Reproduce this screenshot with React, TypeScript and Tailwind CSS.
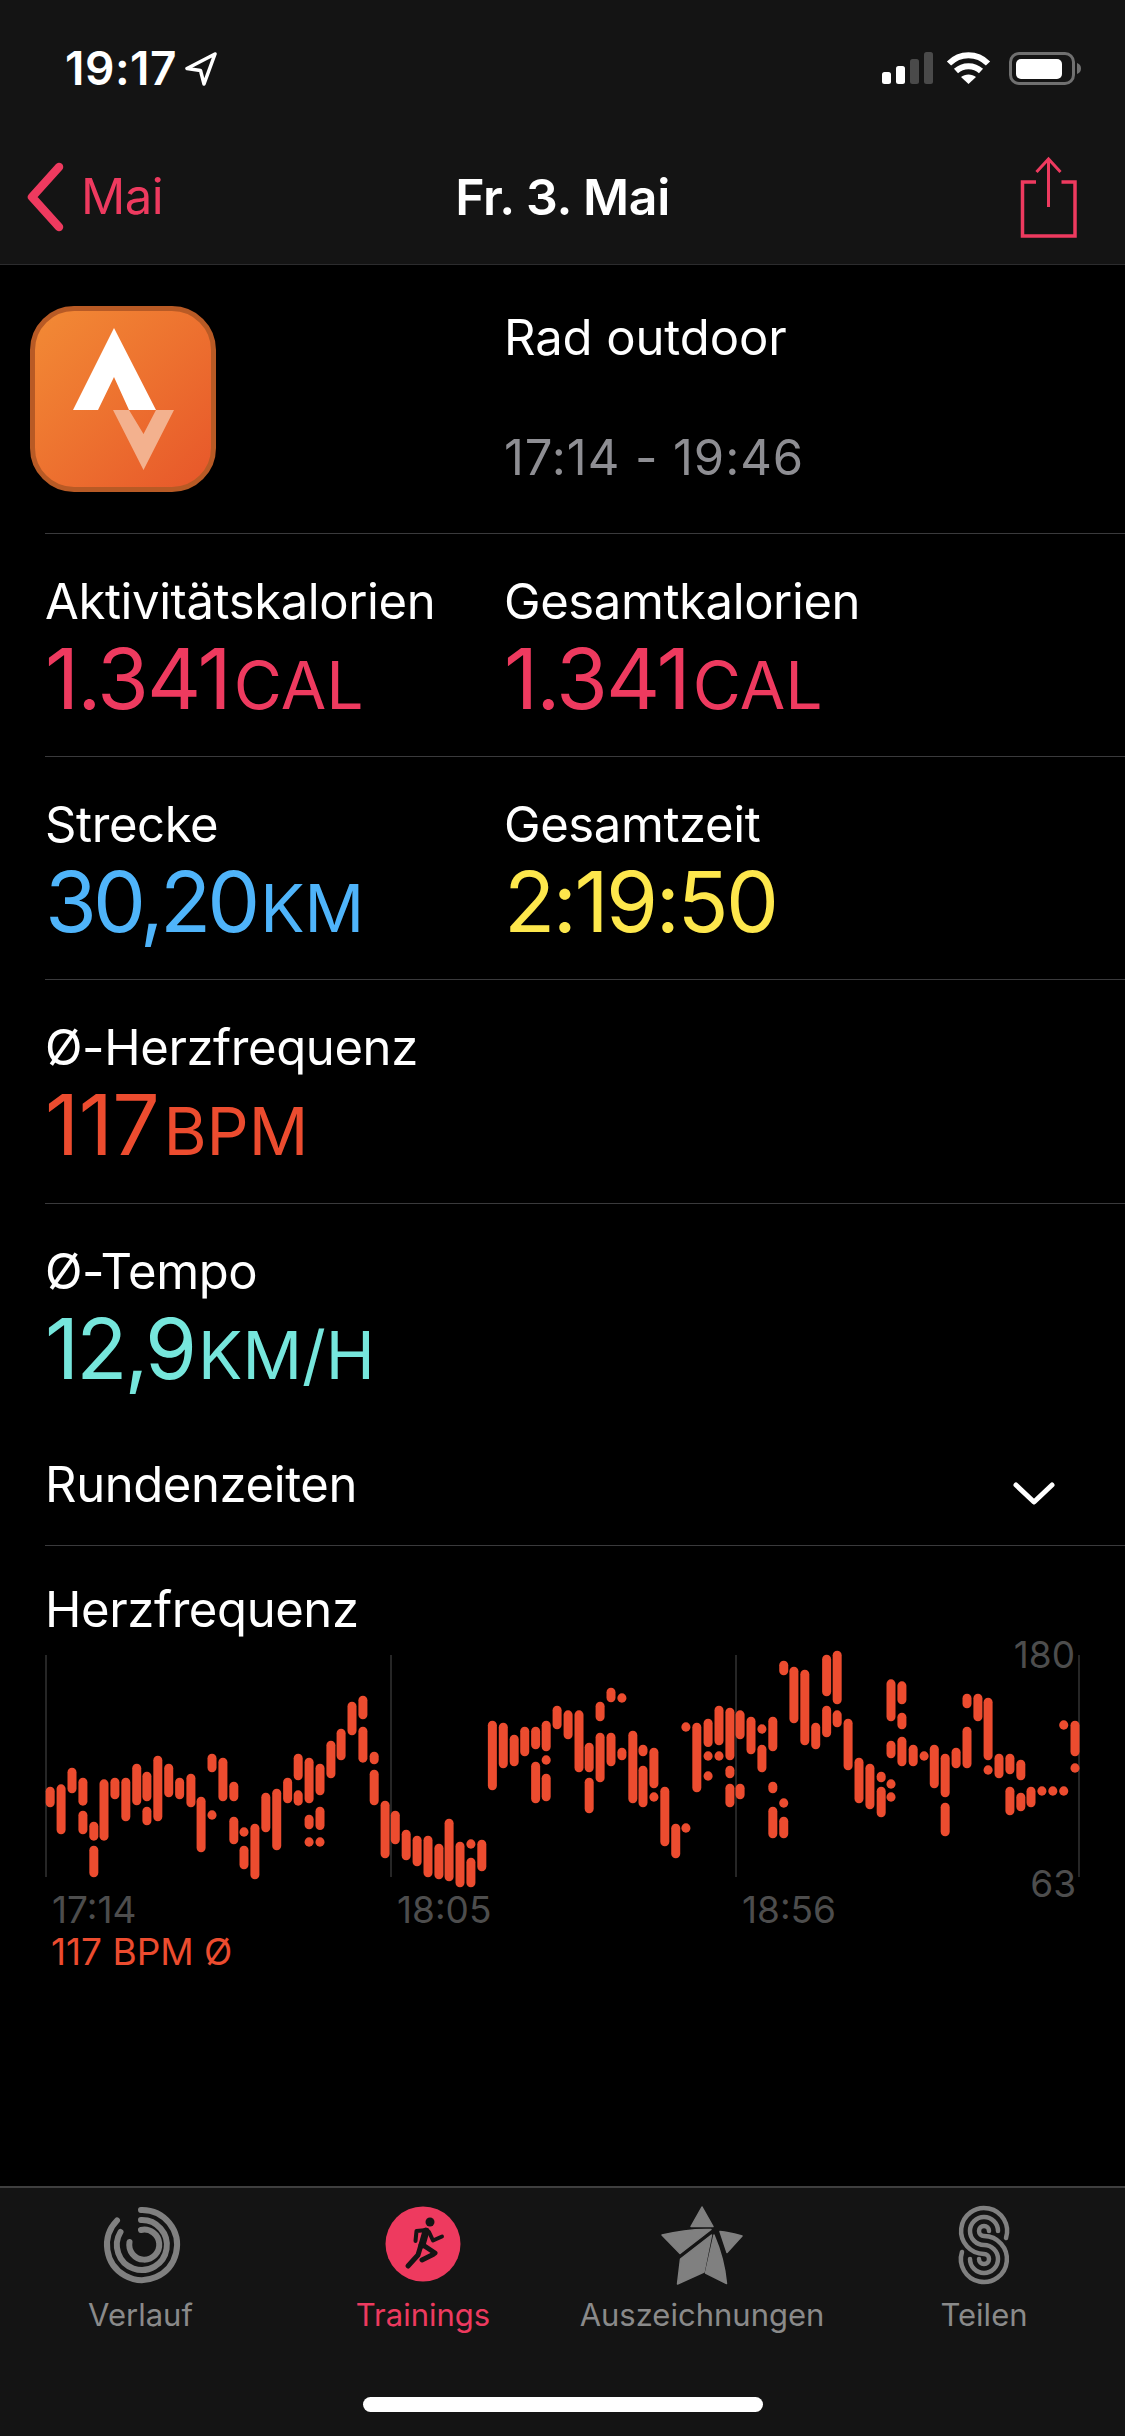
import type { ReactNode } from 'react';

// chart bars as [x, top, bottom], measured in the two zoomed crops
const BARS_LEFT: number[][] = [
  [138, 560, 622], [168, 553, 703], [198, 503, 580], [228, 533, 617], [228, 632, 703],
  [258, 665, 722], [258, 737, 832], [286, 538, 722], [316, 533, 598], [346, 533, 664],
  [376, 491, 616], [404, 515, 604], [404, 620, 676], [434, 467, 664], [464, 491, 592],
  [494, 533, 598], [525, 521, 622], [553, 590, 757], [583, 461, 517], [583, 632, 658],
  [613, 473, 604], [643, 545, 604], [643, 650, 733], [671, 683, 709], [671, 737, 808],
  [701, 671, 838], [731, 578, 697], [761, 566, 751], [791, 533, 610], [820, 461, 541],
  [820, 571, 617], [850, 473, 610], [850, 644, 688], [850, 713, 739], [880, 491, 586],
  [880, 620, 690], [880, 713, 739], [910, 422, 535], [938, 386, 481], [968, 305, 406],
  [998, 287, 358], [998, 380, 488], [1029, 455, 493], [1029, 509, 616], [1059, 602, 775],
  [1087, 632, 733], [1117, 689, 781], [1147, 707, 799], [1177, 707, 832], [1207, 731, 838],
  [1235, 656, 844], [1265, 725, 862], [1295, 719, 745], [1295, 773, 862], [1325, 719, 814],
  [1354, 362, 571], [1384, 368, 505], [1414, 404, 499], [1443, 380, 469], [1473, 380, 448],
  [1473, 485, 610], [1502, 362, 454], [1502, 467, 493], [1502, 521, 604], [1532, 317, 388],
];

const BARS_RIGHT: number[][] = [
  [36, 331, 418], [66, 331, 517], [94, 428, 517], [94, 533, 640], [124, 305, 364],
  [124, 398, 547], [154, 263, 307], [154, 398, 499], [184, 281, 307], [184, 443, 481],
  [214, 392, 610], [242, 434, 469], [242, 497, 622], [272, 443, 565], [272, 578, 604],
  [302, 560, 739], [332, 671, 775], [360, 368, 394], [360, 671, 697], [390, 368, 577],
  [421, 356, 441], [421, 455, 481], [421, 515, 541], [451, 317, 436], [451, 455, 481],
  [481, 323, 481], [481, 497, 535], [481, 551, 622], [509, 331, 418], [509, 551, 598],
  [539, 350, 463], [569, 374, 400], [569, 434, 517], [599, 350, 454], [599, 545, 580],
  [599, 620, 715], [629, 182, 226], [629, 596, 622], [629, 650, 715], [657, 200, 370],
  [687, 209, 436], [717, 368, 448], [747, 164, 289], [747, 317, 412], [776, 152, 313],
  [776, 331, 382], [806, 356, 511], [836, 473, 610], [866, 491, 628], [897, 515, 547],
  [897, 560, 652], [924, 238, 364], [924, 422, 475], [924, 539, 565], [924, 578, 604],
  [954, 244, 313], [954, 338, 388], [954, 410, 499], [985, 434, 499], [1015, 455, 481],
  [1043, 434, 565], [1073, 461, 592], [1073, 608, 709], [1103, 443, 505], [1133, 281, 325],
  [1133, 380, 505], [1163, 281, 364], [1191, 293, 481], [1191, 497, 523], [1221, 461, 535],
  [1251, 461, 523], [1251, 560, 646], [1281, 479, 541], [1281, 578, 634], [1309, 560, 622],
  [1339, 560, 586], [1369, 560, 586], [1399, 362, 388], [1399, 560, 586], [1430, 362, 469],
  [1430, 491, 517],
];

const CHART_TOP = 1640;

const segments = [
  ...BARS_LEFT.map(([x, a, b]) => ({ x: x / 2.75, y1: 1600 + a / 3, y2: 1600 + b / 3 })),
  ...BARS_RIGHT.map(([x, a, b]) => ({ x: 555 + x / 2.75, y1: 1600 + a / 3, y2: 1600 + b / 3 })),
];

function Stat({
  label,
  value,
  unit,
  color,
  tracking = 'tracking-[-2px]',
}: {
  label: string;
  value: string;
  unit?: string;
  color: string;
  tracking?: string;
}) {
  return (
    <div className="w-[459px]">
      <div className="text-[49px] leading-[54px] text-white tracking-[-0.4px]">{label}</div>
      <div className={`mt-[8px] flex items-baseline leading-[84px] ${color}`}>
        <span className={`text-[84px] font-[380] ${tracking}`}>{value}</span>
        {unit && <span className="text-[66px] font-[440] ml-[4px]">{unit}</span>}
      </div>
    </div>
  );
}

function Row({ children, h }: { children: ReactNode; h: string }) {
  return <div className={`ml-[45px] border-b-[1.5px] border-[#3a3a3c] flex items-start ${h}`}>{children}</div>;
}

function TabItem({ icon, label, active, w }: { icon: ReactNode; label: string; active?: boolean; w: string }) {
  return (
    <div className={`flex flex-col items-center flex-none ${w}`}>
      <div className="w-[100px] h-[100px]">{icon}</div>
      <span className={`mt-[2px] text-[31px] leading-[36px] whitespace-nowrap ${active ? 'text-[#ee3a5f]' : 'text-[#8a8a8a]'}`}>
        {label}
      </span>
    </div>
  );
}

function StatusIcons() {
  return (
    <svg width="200" height="40" viewBox="0 0 200 40" className="absolute left-[882px] top-[49px]">
      <rect x="0" y="23" width="9" height="12" rx="2.5" fill="#fff" />
      <rect x="14" y="17" width="9" height="18" rx="2.5" fill="#fff" />
      <rect x="28" y="10" width="9" height="25" rx="2.5" fill="#4a4a4a" />
      <rect x="42" y="3" width="9" height="32" rx="2.5" fill="#4a4a4a" />
      <path d="M67 14.5C78 3.5 95 3.5 106 14.5" fill="none" stroke="#fff" strokeWidth="6" />
      <path d="M74 22C81 15.5 92 15.5 99 22" fill="none" stroke="#fff" strokeWidth="6" />
      <path d="M86.5 35L79 28C83 24.5 90 24.5 94 28Z" fill="#fff" />
      <rect x="128.5" y="4.5" width="63" height="30" rx="8.5" fill="none" stroke="#707070" strokeWidth="3" />
      <rect x="134" y="10" width="46" height="20" rx="5" fill="#fff" />
      <path d="M195 14C198 15 199 17 199 19.5C199 22 198 24 195 25Z" fill="#707070" />
    </svg>
  );
}

export default function App() {
  return (
    <div
      className="w-[1125px] h-[2436px] bg-black text-white flex flex-col overflow-hidden relative"
      style={{ fontFamily: 'Inter, "Noto Sans", sans-serif' }}
    >
      {/* Status + nav */}
      <div className="h-[265px] bg-[#141414] border-b-[1.5px] border-[#2c2c2e] relative flex-none">
        <span className="absolute left-[65px] top-[42px] text-[46px] leading-[52px] font-semibold tracking-[0.5px]">19:17</span>
        <svg width="32" height="34" viewBox="0 0 32 34" className="absolute left-[185px] top-[52px]">
          <path d="M30 2L2 16.5L15.5 18.5L19 32Z" fill="none" stroke="#fff" strokeWidth="3.5" strokeLinejoin="round" />
        </svg>
        <StatusIcons />

        <div className="absolute inset-x-0 top-[160px] h-[74px] flex items-center">
          <svg width="40" height="70" viewBox="0 0 40 70" className="ml-[26px] flex-none">
            <path d="M33 5L6 35L33 65" fill="none" stroke="#ee3a5f" strokeWidth="8.5" strokeLinecap="round" strokeLinejoin="round" />
          </svg>
          <span className="ml-[15px] text-[49px] text-[#ee3a5f] tracking-[-0.5px]">Mai</span>
        </div>
        <div className="absolute inset-x-0 top-[160px] h-[74px] flex items-center justify-center">
          <span className="text-[50px] font-semibold tracking-[-0.4px]">Fr. 3. Mai</span>
        </div>
        <svg width="62" height="84" viewBox="0 0 62 84" className="absolute left-[1018px] top-[156px]">
          <path d="M18 26H4.5V80H57V26H43.5" fill="none" stroke="#ee3a5f" strokeWidth="3.5" />
          <path d="M30.5 51V3M18.5 16L30.5 3L42.5 16" fill="none" stroke="#ee3a5f" strokeWidth="3" />
        </svg>
      </div>

      {/* Header row */}
      <div className="flex-none h-[268px] ml-[30px] flex relative">
        <div className="mt-[41px] w-[186px] h-[186px] rounded-[44px] border-[5px] border-[#b85a25] bg-gradient-to-br from-[#f28a35] to-[#e7562a] flex-none relative">
          <svg width="186" height="186" viewBox="30 306 186 186" className="absolute -left-[5px] -top-[5px]">
            <path d="M113 410H129L143.5 434L156 410H174L143.5 470Z" fill="#f3b18e" />
            <path d="M114 328L156 410H129L114 377L98 410H73Z" fill="#fff" />
          </svg>
        </div>
        <div className="ml-[288px] flex flex-col">
          <span className="mt-[46px] text-[49px] leading-[54px] tracking-[-0.1px]">Rad outdoor</span>
          <span className="mt-[66px] text-[49px] leading-[54px] text-[#8e8e93] tracking-[0.9px]">17:14 - 19:46</span>
        </div>
      </div>

      {/* Stats */}
      <div className="ml-[45px] border-t-[1.5px] border-[#3a3a3c]" />
      <Row h="h-[223px] pt-[41px]">
        <Stat label="Aktivitätskalorien" value="1.341" unit="CAL" color="text-[#ee3a5f]" />
        <Stat label="Gesamtkalorien" value="1.341" unit="CAL" color="text-[#ee3a5f]" />
      </Row>
      <Row h="h-[223px] pt-[41px]">
        <Stat label="Strecke" value="30,20" unit="KM" color="text-[#4fb4fa]" tracking="tracking-[-4px]" />
        <Stat label="Gesamtzeit" value="2:19:50" color="text-[#fde74c]" tracking="tracking-[-2.5px]" />
      </Row>
      <Row h="h-[224px] pt-[41px]">
        <Stat label="Ø-Herzfrequenz" value="117" unit="BPM" color="text-[#ec4c2f]" tracking="tracking-[-0.5px]" />
      </Row>

      <div className="ml-[45px] pt-[41px] h-[224px]">
        <Stat label="Ø-Tempo" value="12,9" unit="KM/H" color="text-[#76e6dc]" tracking="tracking-[-3px]" />
      </div>

      <Row h="h-[118px] pr-[70px] justify-between">
        <span className="mt-[30px] text-[49px] leading-[54px] tracking-[-0.4px]">Rundenzeiten</span>
        <svg width="42" height="24" viewBox="0 0 42 24" className="mt-[53px]">
          <path d="M3 4L21 21L39 4" fill="none" stroke="#fff" strokeWidth="5" strokeLinecap="round" strokeLinejoin="round" />
        </svg>
      </Row>

      <div className="pl-[45px] pt-[37px] flex-none">
        <div className="text-[49px] leading-[54px] tracking-[-0.4px]">Herzfrequenz</div>
      </div>

      {/* Chart */}
      <div className="relative flex-none h-[252px] mt-[3px]">
        <svg width="1125" height="252" viewBox={`0 ${CHART_TOP} 1125 252`} className="absolute left-0 top-0">
          {[46, 391, 736, 1079].map((x) => (
            <line key={x} x1={x} x2={x} y1={1655} y2={1877} stroke="#333" strokeWidth="1.5" />
          ))}
          {segments.map((s, i) => (
            <line
              key={i}
              x1={s.x}
              x2={s.x}
              y1={s.y1 + 4.5}
              y2={s.y2 - 4.5}
              stroke="#ec4c2f"
              strokeWidth="9"
              strokeLinecap="round"
            />
          ))}
        </svg>
        <span className="absolute right-[50px] top-[-5px] text-[37px] leading-[40px] text-[#4d4d4d]">180</span>
        <span className="absolute right-[49px] top-[224px] text-[37px] leading-[40px] text-[#4d4d4d]">63</span>
      </div>

      {/* Axis */}
      <div className="flex-none flex pl-[52px] h-[40px] mt-[-2px] text-[37px] leading-[40px] text-[#4d4d4d]">
        <span className="w-[345px]">17:14</span>
        <span className="w-[345px]">18:05</span>
        <span>18:56</span>
      </div>
      <div className="flex-none pl-[51px] text-[37px] leading-[40px] mt-[2px] text-[#ec4c2f]">117 BPM Ø</div>

      {/* Tab bar */}
      <div className="absolute inset-x-0 top-[2186px] bottom-0 bg-[#141414] border-t-[2px] border-[#3f3f3f]">
        <div className="flex pt-[7px]">
          <TabItem
            w="w-[281px]"
            label="Verlauf"
            icon={
              <svg viewBox="0 0 100 100" width="100" height="100" fill="none" stroke="#808080" strokeWidth="6" strokeLinecap="round">
                <path d="M50 15A35 35 0 1 1 26 25.5" />
                <path d="M50 25A25 25 0 1 1 29.5 37" />
                <path d="M50 35A15 15 0 1 1 38.5 47" />
              </svg>
            }
          />
          <TabItem
            w="w-[284px]"
            active
            label="Trainings"
            icon={
              <svg viewBox="0 0 100 100" width="100" height="100">
                <circle cx="50" cy="49" r="37.5" fill="#ee3a5f" />
                <circle cx="57" cy="27" r="4.5" fill="#141414" />
                <g fill="none" stroke="#141414" strokeLinecap="round" strokeLinejoin="round">
                  <path d="M42.5 46L43.5 36L54 35" strokeWidth="4" />
                  <path d="M53 36L49 50" strokeWidth="7" />
                  <path d="M56 37L60 45.5L69 41.5" strokeWidth="4" />
                  <path d="M48 50L45 60L35 71" strokeWidth="5" />
                  <path d="M50 50L62 58L60 59.5L49 65" strokeWidth="5" />
                </g>
              </svg>
            }
          />
          <TabItem
            w="w-[274px]"
            label="Auszeichnungen"
            icon={
              <svg viewBox="0 0 100 100" width="100" height="100" fill="#808080" stroke="#808080" strokeWidth="1.5" strokeLinejoin="round">
                <path d="M50 12L61 31.5H39Z" />
                <path d="M10 40C26 36 43 34 59 34.5L28 58.5Z" />
                <path d="M59.5 40L52 77L25.5 89L28.5 64Z" />
                <path d="M62 40C68 54 73 72 74.5 88.5L53.5 78Z" />
                <path d="M68 36.5C75 37 83 39 90 41L75 57.5Z" />
              </svg>
            }
          />
          <TabItem
            w="w-[290px]"
            label="Teilen"
            icon={
              <svg viewBox="0 0 100 100" width="100" height="100" fill="none" stroke="#808080" strokeWidth="4.5" strokeLinecap="round">
                <path d="M72 43A23 23 0 1 0 50 59A5 5 0 1 1 45 64" />
                <path d="M64 36A14 14 0 1 0 50 50A14 14 0 1 1 36 64" />
                <path d="M55 36A5 5 0 1 0 50 41A23 23 0 1 1 28 57" />
              </svg>
            }
          />
        </div>
        <div className="absolute left-[363px] top-[209px] w-[400px] h-[15px] rounded-full bg-white" />
      </div>
    </div>
  );
}
